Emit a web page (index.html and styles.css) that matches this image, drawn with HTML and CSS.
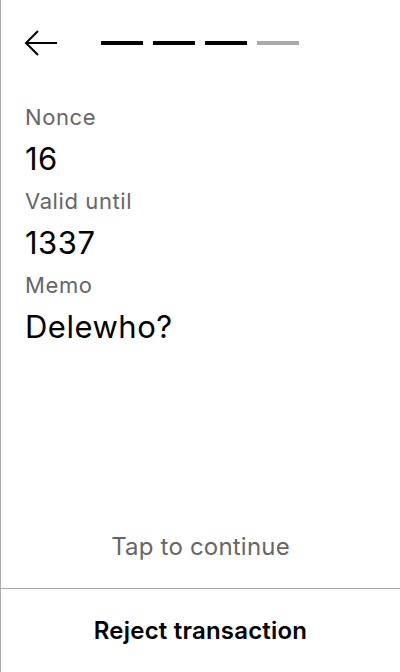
FILE: index.html
```html
<!DOCTYPE html>
<html>
<head>
<meta charset="utf-8">
<link rel="stylesheet" href="styles.css">
</head>
<body>
<div class="screen">
  <div class="header">
    <svg class="back" width="34" height="28" viewBox="0 0 34 28">
      <path d="M33 14 H3 M14 2 L2 14 L14 26" fill="none" stroke="#000" stroke-width="2"/>
    </svg>
    <div class="steps">
      <span class="step done"></span>
      <span class="step done"></span>
      <span class="step done"></span>
      <span class="step todo"></span>
    </div>
  </div>
  <div class="content">
    <div class="label">Nonce</div>
    <div class="value">16</div>
    <div class="label">Valid until</div>
    <div class="value">1337</div>
    <div class="label">Memo</div>
    <div class="value">Delewho?</div>
  </div>
  <div class="tap">Tap to continue</div>
  <div class="reject">Reject transaction</div>
</div>
</body>
</html>
```
FILE: styles.css
```css
html, body {
  margin: 0;
  padding: 0;
  background: #fff;
}
.screen {
  box-sizing: border-box;
  width: 400px;
  height: 672px;
  border-left: 1px solid #aaa;
  display: flex;
  flex-direction: column;
  font-family: Inter, "Noto Sans", sans-serif;
  color: #000;
}
.header {
  display: flex;
  align-items: center;
  height: 86px;
  padding-left: 23px;
}
.back {
  display: block;
}
.steps {
  display: flex;
  gap: 10px;
  margin-left: 43px;
}
.step {
  display: block;
  width: 42px;
  height: 4px;
}
.step.done { background: #000; }
.step.todo { background: #aaa; }
.content {
  padding: 10px 24px 0;
  flex: 1;
}
.label {
  font-size: 22px;
  line-height: 42px;
  color: #666;
  letter-spacing: 0.6px;
}
.value {
  font-size: 31px;
  line-height: 42px;
  letter-spacing: 0.5px;
}
.tap {
  text-align: center;
  font-size: 24px;
  color: #666;
  line-height: 42px;
  padding-bottom: 20px;
  letter-spacing: 0.2px;
}
.reject {
  border-top: 1px solid #aaa;
  height: 83px;
  display: flex;
  align-items: center;
  justify-content: center;
  font-size: 24px;
  font-weight: 600;
  letter-spacing: 0.2px;
}
```
